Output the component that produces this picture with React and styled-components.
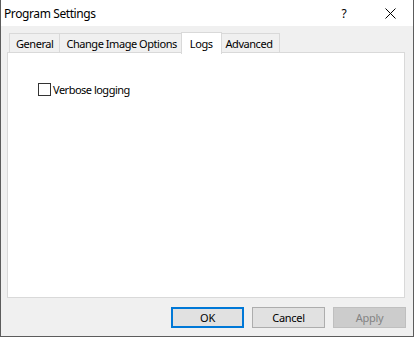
import React, { useState } from "react";
import styled, { createGlobalStyle } from "styled-components";

const Global = createGlobalStyle`
  html, body { margin: 0; padding: 0; background: #ffffff; }
  body { font-family: "Noto Sans", "Open Sans", sans-serif; font-size: 11px; color: #000; }
`;

const Window = styled.div`
  box-sizing: border-box;
  width: 414px;
  height: 337px;
  border: 1px solid #5c5c5c;
  border-top: none;
  background: #f0f0f0;
  display: flex;
  flex-direction: column;
`;

const TitleBar = styled.div`
  height: 26px;
  background: #ffffff;
  display: flex;
  align-items: center;
  padding-left: 3px;
`;

const Title = styled.div`
  flex: 1;
  font-size: 12px;
  letter-spacing: -0.4px;
  color: #000;
`;

const CaptionButton = styled.div`
  width: 46px;
  height: 26px;
  display: flex;
  align-items: center;
  justify-content: center;
  font-size: 12px;
  color: #000;
`;

const Body = styled.div`
  flex: 1;
  display: flex;
  flex-direction: column;
  padding: 7px 8px 8px 6px;
`;

const TabStrip = styled.div`
  display: flex;
  align-items: flex-end;
  height: 20px;
  padding-left: 2px;
  position: relative;
  z-index: 1;
`;

const Tab = styled.div`
  box-sizing: border-box;
  height: ${(p) => (p.$active ? "22px" : "20px")};
  margin-right: ${(p) => (p.$active ? "-2px" : "0")};
  margin-bottom: ${(p) => (p.$active ? "-1px" : "0")};
  margin-left: ${(p) => (p.$first ? "0" : p.$active ? "-3px" : "-1px")};
  padding: ${(p) => (p.$active ? "3px 8px 0" : "2px 6px 0")};
  background: ${(p) => (p.$active ? "#ffffff" : "#f0f0f0")};
  border: 1px solid #d9d9d9;
  border-bottom: ${(p) => (p.$active ? "none" : "1px solid #d9d9d9")};
  font-size: 11px;
  letter-spacing: -0.45px;
  line-height: 15px;
  white-space: nowrap;
  position: relative;
  z-index: ${(p) => (p.$active ? 2 : 1)};
`;

const Panel = styled.div`
  flex: 1;
  margin-top: -1px;
  background: #ffffff;
  border: 1px solid #d9d9d9;
  padding: 30px 30px;
`;

const CheckRow = styled.label`
  display: flex;
  align-items: center;
  gap: 2px;
  font-size: 11px;
  line-height: 13px;
  letter-spacing: -0.5px;
  cursor: default;
`;

const Box = styled.span`
  box-sizing: border-box;
  width: 13px;
  height: 13px;
  border: 1px solid #333333;
  background: #fff;
  display: inline-block;
`;

const Footer = styled.div`
  display: flex;
  justify-content: flex-end;
  gap: 8px;
  padding-top: 9px;
  margin-right: -1px;
`;

const Button = styled.div`
  box-sizing: border-box;
  width: 73px;
  height: 21px;
  display: flex;
  align-items: center;
  justify-content: center;
  font-size: 11px;
  letter-spacing: -0.3px;
  background: ${(p) => (p.$disabled ? "#cccccc" : "#e1e1e1")};
  color: ${(p) => (p.$disabled ? "#838383" : "#000")};
  border: ${(p) =>
    p.$default ? "2px solid #0078d7" : p.$disabled ? "1px solid #bfbfbf" : "1px solid #adadad"};
`;

const tabs = ["General", "Change Image Options", "Logs", "Advanced"];

export default function App() {
  const [active] = useState(2);
  return (
    <>
      <Global />
      <Window>
        <TitleBar>
          <Title>Program Settings</Title>
          <CaptionButton>?</CaptionButton>
          <CaptionButton>
            <svg width="11" height="11" viewBox="0 0 11 11">
              <path d="M0.5 0.5 L10.5 10.5 M10.5 0.5 L0.5 10.5" stroke="#000" strokeWidth="1" fill="none" />
            </svg>
          </CaptionButton>
        </TitleBar>
        <Body>
          <TabStrip>
            {tabs.map((t, i) => (
              <Tab key={t} $active={i === active} $first={i === 0}>
                {t}
              </Tab>
            ))}
          </TabStrip>
          <Panel>
            <CheckRow>
              <Box />
              Verbose logging
            </CheckRow>
          </Panel>
          <Footer>
            <Button $default>OK</Button>
            <Button>Cancel</Button>
            <Button $disabled>Apply</Button>
          </Footer>
        </Body>
      </Window>
    </>
  );
}
